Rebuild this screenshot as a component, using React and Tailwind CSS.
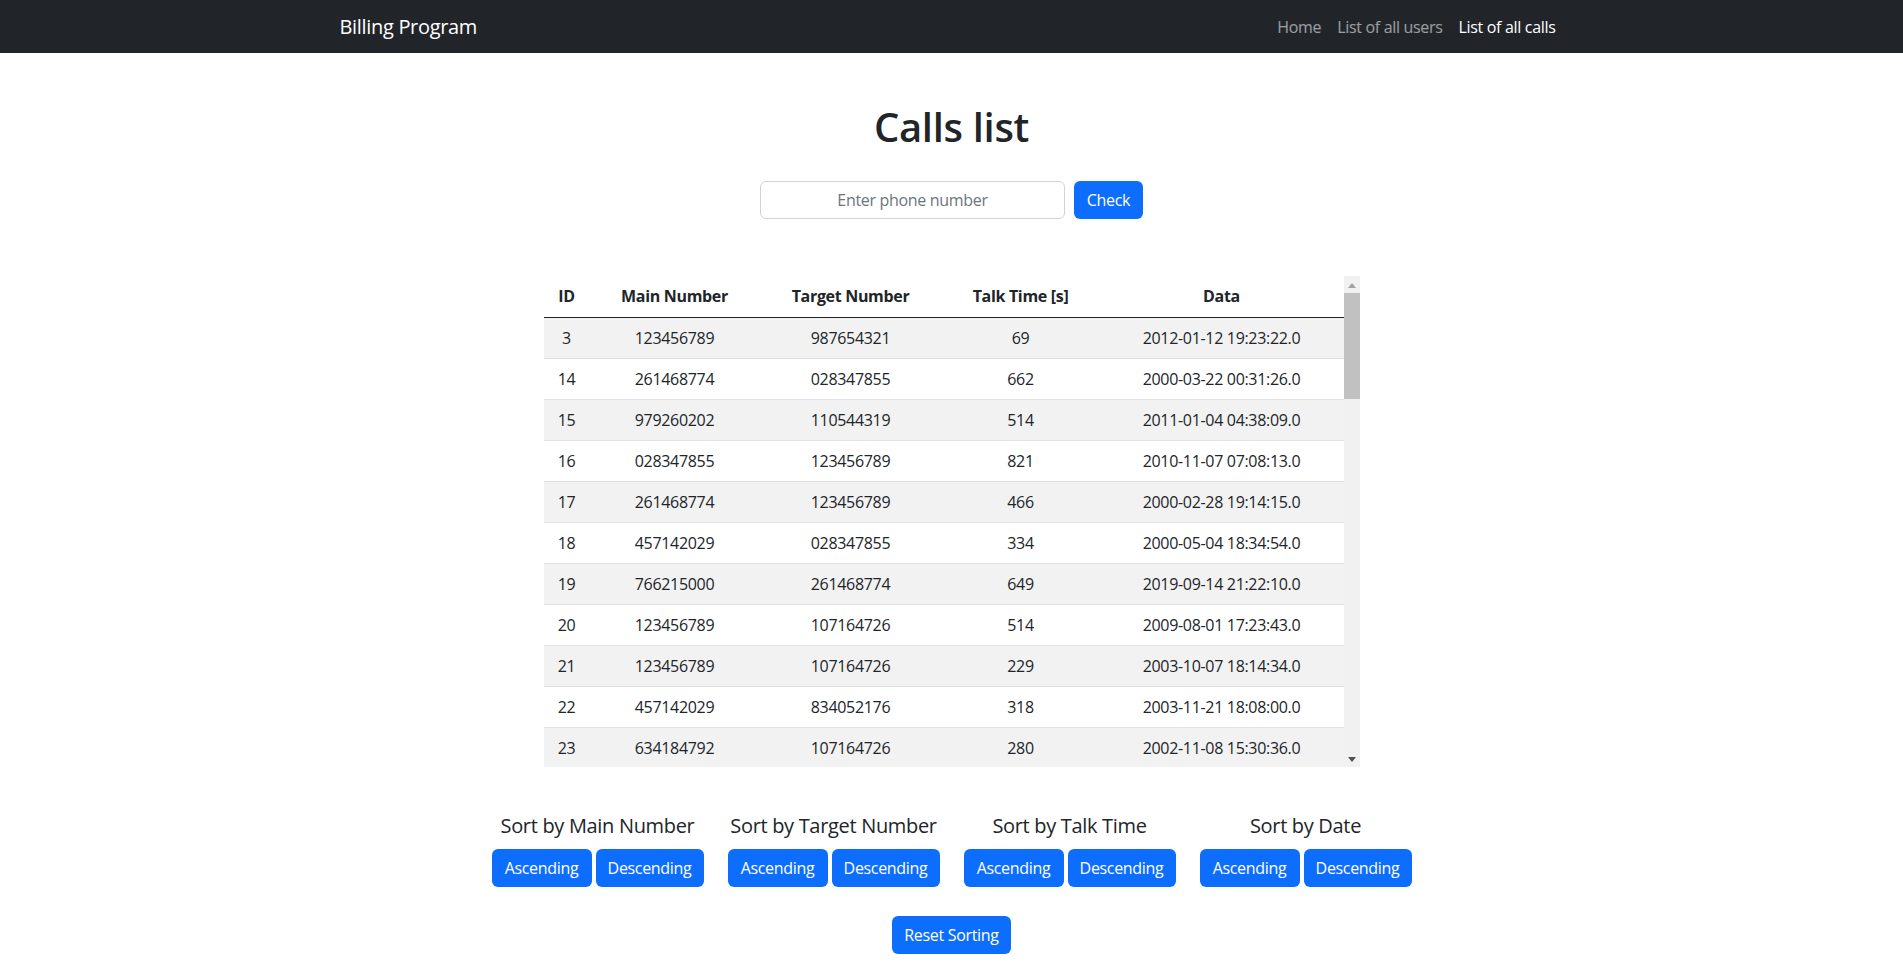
import React from 'react';

const calls = [
  [3, '123456789', '987654321', 69, '2012-01-12 19:23:22.0'],
  [14, '261468774', '028347855', 662, '2000-03-22 00:31:26.0'],
  [15, '979260202', '110544319', 514, '2011-01-04 04:38:09.0'],
  [16, '028347855', '123456789', 821, '2010-11-07 07:08:13.0'],
  [17, '261468774', '123456789', 466, '2000-02-28 19:14:15.0'],
  [18, '457142029', '028347855', 334, '2000-05-04 18:34:54.0'],
  [19, '766215000', '261468774', 649, '2019-09-14 21:22:10.0'],
  [20, '123456789', '107164726', 514, '2009-08-01 17:23:43.0'],
  [21, '123456789', '107164726', 229, '2003-10-07 18:14:34.0'],
  [22, '457142029', '834052176', 318, '2003-11-21 18:08:00.0'],
  [23, '634184792', '107164726', 280, '2002-11-08 15:30:36.0'],
];

const sortGroups = ['Sort by Main Number', 'Sort by Target Number', 'Sort by Talk Time', 'Sort by Date'];

const Navbar = () => (
  <nav className="bg-[#212529] h-[53px]">
    <div className="w-[1248px] mx-auto px-3 h-full flex items-center justify-between">
      <a className="text-white text-[20px] leading-[30px]">Billing Program</a>
      <div className="flex items-center text-[16px] leading-6">
        <a className="px-2 text-white/55">Home</a>
        <a className="px-2 text-white/55">List of all users</a>
        <a className="px-2 text-white">List of all calls</a>
      </div>
    </div>
  </nav>
);

// drawn scrollbar, the headless browser hides the native one
const ScrollBar = () => (
  <div className="w-[16px] flex flex-col bg-[#f1f1f1] pt-[1px]">
    <div className="h-[16px] flex items-center justify-center">
      <svg width="8" height="5" viewBox="0 0 8 5">
        <polygon points="4,0 8,5 0,5" fill="#a3a3a3" />
      </svg>
    </div>
    <div className="h-[106px] bg-[#c1c1c1]" />
    <div className="flex-1" />
    <div className="h-[16px] flex items-center justify-center">
      <svg width="8" height="5" viewBox="0 0 8 5">
        <polygon points="0,0 8,0 4,5" fill="#505050" />
      </svg>
    </div>
  </div>
);

const CallsTable = () => (
  <div className="flex h-[491px]">
    <div className="w-[800px] overflow-hidden">
      <table className="w-full border-collapse text-[16px] leading-6 text-[#212529]">
        <colgroup>
          <col className="w-[46px]" />
          <col className="w-[170px]" />
          <col className="w-[182px]" />
          <col className="w-[158px]" />
          <col />
        </colgroup>
        <thead>
          <tr className="border-b border-[#212529]">
            {['ID', 'Main Number', 'Target Number', 'Talk Time [s]', 'Data'].map((h) => (
              <th key={h} className="pt-2 pb-[9px] font-bold text-center">{h}</th>
            ))}
          </tr>
        </thead>
        <tbody>
          {calls.map((row, i) => (
            <tr key={row[0]} className={`border-b border-[#dee2e6] ${i % 2 === 0 ? 'bg-[#f2f2f2]' : 'bg-white'}`}>
              {row.map((cell, j) => (
                <td key={j} className="py-2 text-center">{cell}</td>
              ))}
            </tr>
          ))}
        </tbody>
      </table>
    </div>
    <ScrollBar />
  </div>
);

const Btn = ({ children, className = '' }) => (
  <button className={`h-[38px] bg-[#0d6efd] text-white text-[16px] rounded-md ${className}`}>{children}</button>
);

export default function App() {
  return (
    <div className="min-h-screen bg-white text-[#212529] tracking-[-0.02em] font-['Segoe_UI','Open_Sans',sans-serif]">
      <Navbar />
      <main className="flex flex-col items-center">
        <h1 className="mt-[50px] text-[40px] leading-[48px] font-semibold">Calls list</h1>

        <div className="mt-[30px] flex gap-[9px]">
          <input
            placeholder="Enter phone number"
            className="w-[305px] h-[38px] border border-[#ced4da] rounded-md text-center text-[16px] placeholder:text-[#6c757d]"
          />
          <Btn className="w-[69px]">Check</Btn>
        </div>

        <div className="mt-[57px]">
          <CallsTable />
        </div>

        <div className="mt-[47px] flex gap-[24px]">
          {sortGroups.map((title) => (
            <div key={title} className="flex flex-col items-center">
              <h5 className="text-[20px] leading-6 font-medium whitespace-nowrap">{title}</h5>
              <div className="mt-[11px] flex gap-[4px]">
                <Btn className="w-[100px]">Ascending</Btn>
                <Btn className="w-[108px]">Descending</Btn>
              </div>
            </div>
          ))}
        </div>

        <Btn className="mt-[29px] w-[119px]">Reset Sorting</Btn>
      </main>
    </div>
  );
}
